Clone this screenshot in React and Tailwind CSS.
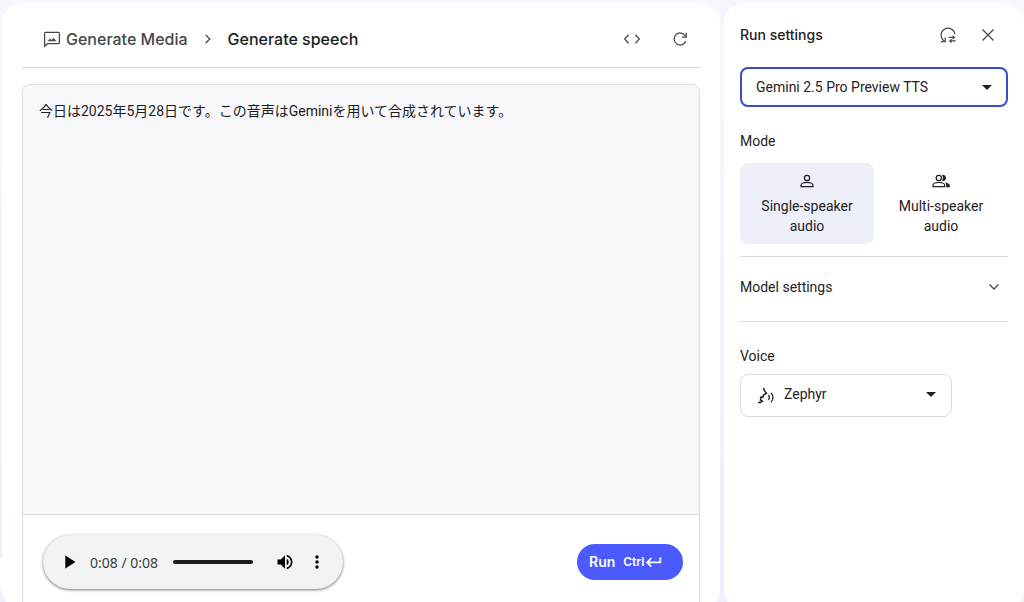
import { useState } from 'react'
import { MdArrowDropDown, MdMoreVert, MdPlayArrow, MdVolumeUp } from 'react-icons/md'

function Icon({ children, className = 'size-5', strokeWidth = 1.25 }) {
  return (
    <svg
      viewBox="0 0 20 20"
      fill="none"
      stroke="currentColor"
      strokeWidth={strokeWidth}
      className={`shrink-0 ${className}`}
      aria-hidden="true"
    >
      {children}
    </svg>
  )
}

function MediaIcon() {
  return (
    <Icon>
      <path d="M2.6 17.2V4.2c0-.6.3-.9.9-.9h13c.6 0 .9.3.9.9v9.6c0 .6-.3.9-.9.9H5.3z" />
      <path d="M5.6 12.2 8 9.6l1.4 1.5 2.2-2.4 2.8 3.5z" fill="currentColor" stroke="none" />
    </Icon>
  )
}

function ResetIcon() {
  return (
    <Icon>
      <path d="M6.8 16.2A6.9 6.9 0 1 1 16.9 9.2" />
      <path d="M3 16.7h4.2v-4.2" />
      <path d="M10.6 12.4h5.8M14.6 10.6l1.9 1.8-1.9 1.8M17.6 15.9h-5.8M13.6 14.1l-1.9 1.8 1.9 1.8" strokeWidth="1.1" />
    </Icon>
  )
}

function PersonIcon() {
  return (
    <Icon>
      <circle cx="10" cy="6.9" r="2.6" />
      <path d="M4 15.7v-1.5c0-2 3.6-2.9 6-2.9s6 .9 6 2.9v1.5z" />
    </Icon>
  )
}

function PeopleIcon() {
  return (
    <Icon>
      <circle cx="7.8" cy="6.9" r="2.6" />
      <path d="M1.9 15.7v-1.5c0-2 3.5-2.9 5.9-2.9s5.9.9 5.9 2.9v1.5z" />
      <path
        d="M11 10c1.2-1.8 1.2-4.3 0-6.2 2-.5 4 .9 4 3.1s-2 3.6-4 3.1zM15.2 16.3v-2.1c0-1-.4-1.9-1.3-2.6 2.3.4 4.9 1.1 4.9 2.8v1.9z"
        fill="currentColor"
        stroke="none"
      />
    </Icon>
  )
}

function VoiceIcon() {
  return (
    <Icon strokeWidth={1.5}>
      <path d="M7.6 2 8.4 4.6l2 2.6-3 2-.2 1.600-2.600.6.4 1.400-.6 1.200 2 1.200-2 1.400H2" />
      <path d="M12.400 9c1.300 1.300 1.300 3.600 0 4.900M15 7c2.600 2.400 2.600 6.600 0 9" strokeWidth="1.3" />
    </Icon>
  )
}

function IconButton({ label, children }) {
  return (
    <button type="button" aria-label={label} className="flex size-8 items-center justify-center">
      {children}
    </button>
  )
}

function Header() {
  return (
    <header className="flex h-[65px] shrink-0 items-center border-b border-[#dcdcdf] pt-[7px] pl-5 pr-1">
      <a href="#media" className="flex items-center gap-1 text-base font-medium text-[#45474d]">
        <MediaIcon />
        Generate Media
      </a>
      <Icon className="mx-[11px] size-[18px] text-[#45474d]" strokeWidth={1.4}>
        <path d="m7.500 5.500 4.500 4.500-4.500 4.500" />
      </Icon>
      <h1 className="text-base font-medium text-[#1a1c1e]">Generate speech</h1>
      <div className="ml-auto flex gap-4 text-[#45474d]">
        <IconButton label="Get code">
          <Icon>
            <path d="M6.600 5.800 2.600 10l4 4.200M13.400 5.800l4 4.200-4 4.200" />
          </Icon>
        </IconButton>
        <IconButton label="Refresh">
          <Icon>
            <path d="M15.700 12.200A6 6 0 1 1 15 6.500l1 1.300" />
            <path d="M16.200 3.800v4.300h-4.300" />
          </Icon>
        </IconButton>
      </div>
    </header>
  )
}

function AudioPlayer() {
  return (
    <div className="flex h-[54px] w-[300px] items-center rounded-full bg-[#f1f3f4] px-2.5 text-black shadow-[0_1px_3px_rgba(0,0,0,0.55)]">
      <IconButton label="Play">
        <MdPlayArrow className="size-[22px]" />
      </IconButton>
      <span className="ml-[5px] pt-0.5 font-['Noto_Sans',sans-serif] text-sm text-[#3c4043]">0:08 / 0:08</span>
      <input
        type="range"
        aria-label="Seek"
        min="0"
        max="8"
        defaultValue="8"
        className="mr-4 ml-[15px] h-1 w-0 flex-1 appearance-none rounded-full bg-[#1c1a1e] [&::-webkit-slider-thumb]:size-0 [&::-webkit-slider-thumb]:appearance-none"
      />
      <IconButton label="Mute">
        <MdVolumeUp className="size-5" />
      </IconButton>
      <IconButton label="More options">
        <MdMoreVert className="size-5" />
      </IconButton>
    </div>
  )
}

function Workspace() {
  const [text, setText] = useState('今日は2025年5月28日です。この音声はGeminiを用いて合成されています。')

  return (
    <main className="flex min-w-0 flex-1 flex-col rounded-[20px] bg-white px-5">
      <Header />
      <section className="mt-4 flex flex-1 flex-col overflow-hidden rounded-t-lg border border-b-0 border-[#dcdcdf]">
        <textarea
          aria-label="Prompt"
          value={text}
          onChange={(e) => setText(e.target.value)}
          className="flex-1 resize-none border-b border-[#dcdcdf] bg-[#f8f8fb] p-4 font-[Roboto,'Noto_Sans_CJK_JP',sans-serif] text-sm text-[#1a1c1e] outline-none"
        />
        <div className="flex h-[95px] shrink-0 items-start justify-between pt-5 pr-4 pl-5">
          <AudioPlayer />
          <button
            type="button"
            className="mt-[9px] flex h-9 w-[106px] items-center rounded-full bg-[#4a5aff] pl-3 text-sm font-semibold text-white"
          >
            Run
            <span className="ml-2 text-xs">Ctrl</span>
            <Icon className="ml-px size-[18px]" strokeWidth={2}>
              <path d="M17 5v5.500H3M7 5.800 2.500 10.500 7 15.200" />
            </Icon>
          </button>
        </div>
      </section>
    </main>
  )
}

function ModeButton({ icon, label, active, onClick }) {
  return (
    <button
      type="button"
      aria-pressed={active}
      onClick={onClick}
      className={`flex flex-1 flex-col items-center rounded-lg px-3 py-2 leading-5 ${active ? 'bg-[#edf0fa]' : ''}`}
    >
      {icon}
      <span className="mt-[5px]">
        {label}
        <br />
        audio
      </span>
    </button>
  )
}

function RunSettings() {
  const [mode, setMode] = useState('single')

  return (
    <aside className="ml-1 w-[300px] shrink-0 rounded-[20px] bg-white px-4 font-[Roboto,sans-serif] text-sm text-[#1f2124]">
      <div className="flex h-16 items-center">
        <h2 className="font-[Inter,sans-serif] font-medium">Run settings</h2>
        <div className="ml-auto flex gap-2 pr-1 text-[#45474d]">
          <IconButton label="Reset settings">
            <ResetIcon />
          </IconButton>
          <IconButton label="Close">
            <Icon>
              <path d="m4.500 4.500 11 11M15.500 4.500l-11 11" />
            </Icon>
          </IconButton>
        </div>
      </div>

      <div className="grid items-center">
        <select
          aria-label="Model"
          className="col-start-1 row-start-1 h-10 appearance-none rounded-lg border-2 border-[#3b4bce] bg-white px-3.5 outline-none"
        >
          <option>Gemini 2.5 Pro Preview TTS</option>
        </select>
        <MdArrowDropDown className="pointer-events-none col-start-1 row-start-1 mr-[9px] size-6 justify-self-end" />
      </div>

      <h3 className="mt-6 leading-5">Mode</h3>
      <div className="mt-3 flex">
        <ModeButton
          icon={<PersonIcon />}
          label="Single-speaker"
          active={mode === 'single'}
          onClick={() => setMode('single')}
        />
        <ModeButton
          icon={<PeopleIcon />}
          label="Multi-speaker"
          active={mode === 'multi'}
          onClick={() => setMode('multi')}
        />
      </div>

      <button
        type="button"
        aria-expanded="false"
        className="mt-3 flex h-[66px] w-full items-center justify-between border-y border-[#dcdcdf] pr-1 pb-1"
      >
        Model settings
        <Icon className="size-5 text-[#45474d]">
          <path d="m5.500 7.500 4.500 4.500 4.500-4.500" />
        </Icon>
      </button>

      <label htmlFor="voice" className="mt-6 block leading-5">
        Voice
      </label>
      <div className="mt-2 grid w-[212px] items-center">
        <select
          id="voice"
          className="col-start-1 row-start-1 h-[43px] appearance-none rounded-lg border border-[#dcdcdf] bg-white pb-1 pl-[43px] outline-none"
        >
          <option>Zephyr</option>
        </select>
        <span className="pointer-events-none col-start-1 row-start-1 ml-4">
          <VoiceIcon />
        </span>
        <MdArrowDropDown className="pointer-events-none col-start-1 row-start-1 mr-[9px] mb-1 size-6 justify-self-end" />
      </div>
    </aside>
  )
}

export default function App() {
  return (
    <div className="h-screen overflow-hidden bg-linear-to-b from-[#f6f7fe] to-[#efeffd] font-[Inter,'Noto_Sans_CJK_JP',sans-serif]">
      <div className="flex h-[calc(100vh+8px)] pt-[3px]">
        {/* edge of the collapsed nav */}
        <div className="flex w-0.5 flex-col justify-end pb-5">
          <div className="h-8 bg-white" />
        </div>
        <Workspace />
        <RunSettings />
      </div>
    </div>
  )
}
